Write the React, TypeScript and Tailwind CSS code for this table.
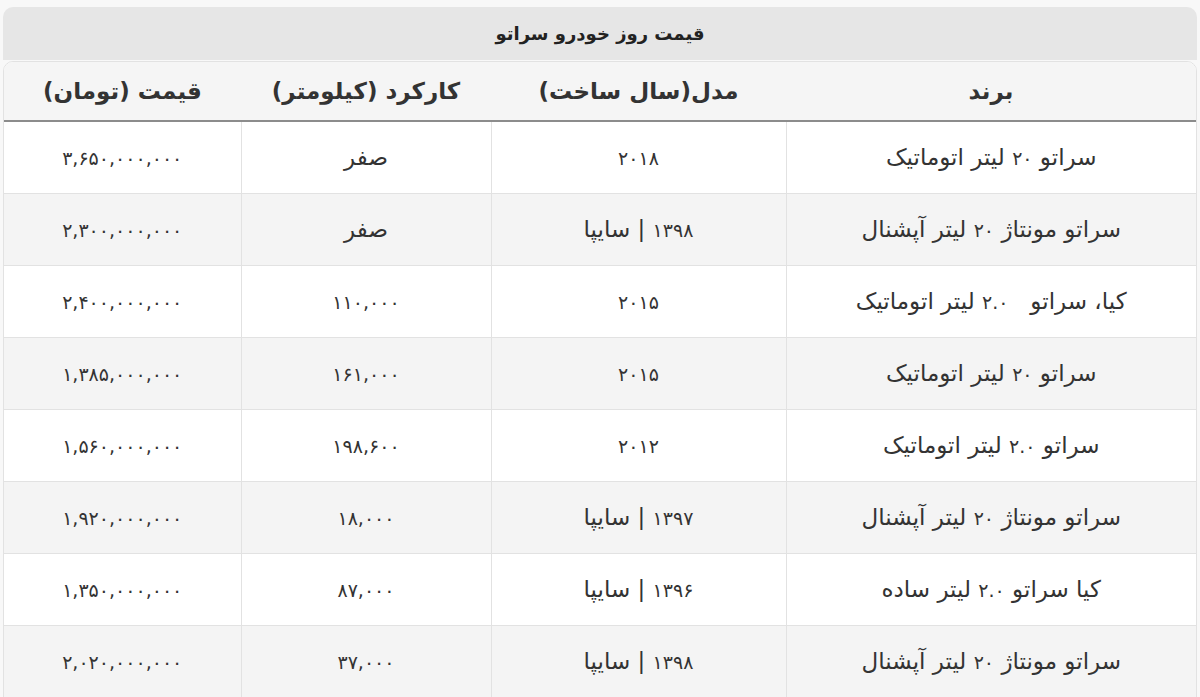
// Saratu car price table (RTL, Persian)

interface CarRow {
  brand: string;
  model: string;
  mileage: string;
  price: string;
}

const rows: CarRow[] = [
  { brand: "سراتو ۲۰ لیتر اتوماتیک", model: "۲۰۱۸", mileage: "صفر", price: "۳,۶۵۰,۰۰۰,۰۰۰" },
  { brand: "سراتو مونتاژ ۲۰ لیتر آپشنال", model: "۱۳۹۸ | سایپا", mileage: "صفر", price: "۲,۳۰۰,۰۰۰,۰۰۰" },
  { brand: "کیا، سراتو   ۲.۰ لیتر اتوماتیک", model: "۲۰۱۵", mileage: "۱۱۰,۰۰۰", price: "۲,۴۰۰,۰۰۰,۰۰۰" },
  { brand: "سراتو ۲۰ لیتر اتوماتیک", model: "۲۰۱۵", mileage: "۱۶۱,۰۰۰", price: "۱,۳۸۵,۰۰۰,۰۰۰" },
  { brand: "سراتو ۲.۰ لیتر اتوماتیک", model: "۲۰۱۲", mileage: "۱۹۸,۶۰۰", price: "۱,۵۶۰,۰۰۰,۰۰۰" },
  { brand: "سراتو مونتاژ ۲۰ لیتر آپشنال", model: "۱۳۹۷ | سایپا", mileage: "۱۸,۰۰۰", price: "۱,۹۲۰,۰۰۰,۰۰۰" },
  { brand: "کیا سراتو ۲.۰ لیتر ساده", model: "۱۳۹۶ | سایپا", mileage: "۸۷,۰۰۰", price: "۱,۳۵۰,۰۰۰,۰۰۰" },
  { brand: "سراتو مونتاژ ۲۰ لیتر آپشنال", model: "۱۳۹۸ | سایپا", mileage: "۳۷,۰۰۰", price: "۲,۰۲۰,۰۰۰,۰۰۰" },
];

const headers = ["برند", "مدل(سال ساخت)", "کارکرد (کیلومتر)", "قیمت (تومان)"];
const widths = ["w-[410px]", "w-[295px]", "w-[250px]", "w-[237px]"];

// the digits in this font run wider than the letters, so shrink them a bit
function Cell({ text }: { text: string }) {
  const parts = text.split(/([۰-۹][۰-۹,.]*)/);
  return (
    <>
      {parts.map((p, i) =>
        /^[۰-۹]/.test(p) ? (
          <span key={i} className="text-[19px]">
            {p}
          </span>
        ) : (
          <span key={i}>{p}</span>
        )
      )}
    </>
  );
}

export default function App() {
  return (
    <main
      dir="rtl"
      className="min-h-screen bg-[#f8f8f8] px-[3px] pt-[7px] text-[#333] [font-family:'DejaVu_Sans',sans-serif]"
    >
      {/* Title bar */}
      <div className="flex h-[53px] items-center justify-center rounded-t-[10px] bg-[#e6e6e6] text-[18px] font-bold text-[#222]">
        قیمت روز خودرو سراتو
      </div>

      {/* Table */}
      <div className="mt-px overflow-hidden rounded-t-[10px] border border-[#e2e2e2] bg-white">
        <table className="w-full table-fixed border-collapse">
          <thead>
            <tr className="h-[59px] border-b-2 border-[#8c8c8c] bg-[#f5f5f5]">
              {headers.map((h, i) => (
                <th key={h} className={`${widths[i]} text-center text-[23px] font-bold text-[#333]`}>
                  {h}
                </th>
              ))}
            </tr>
          </thead>
          <tbody>
            {rows.map((r, i) => (
              <tr
                key={i}
                className={`h-[72px] border-b border-[#e2e2e2] ${i % 2 === 1 ? "bg-[#f4f4f4]" : "bg-white"}`}
              >
                {[r.brand, r.model, r.mileage, r.price].map((c, j) => (
                  <td
                    key={j}
                    className="border-l border-[#e2e2e2] text-center text-[23px] whitespace-pre last:border-l-0"
                  >
                    <Cell text={c} />
                  </td>
                ))}
              </tr>
            ))}
          </tbody>
        </table>
      </div>
    </main>
  );
}
